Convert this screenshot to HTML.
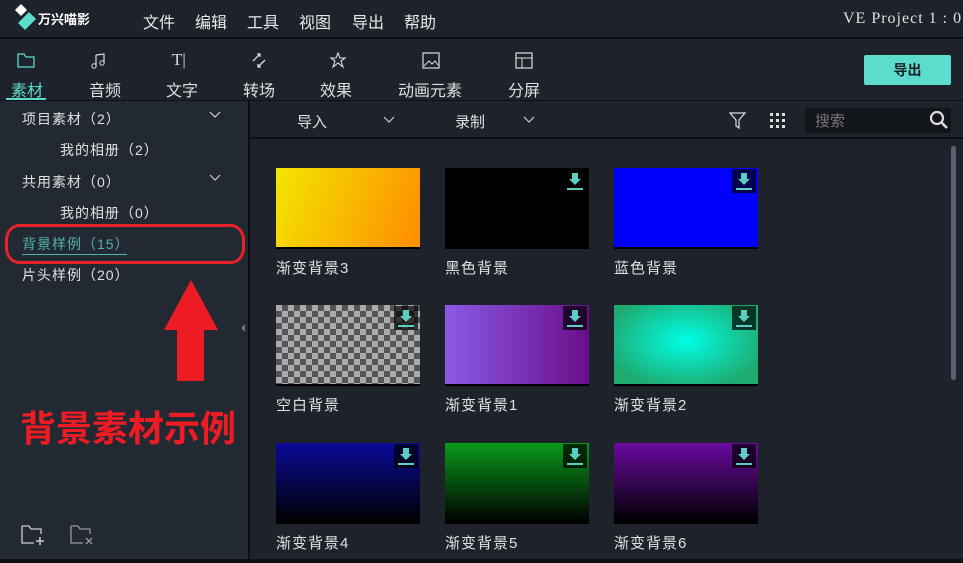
<!DOCTYPE html>
<html><head><meta charset="utf-8"><style>
*{margin:0;padding:0;box-sizing:border-box}
body{width:963px;height:563px;overflow:hidden;background:#1e232b;font-family:"Liberation Sans","Noto Sans CJK SC",sans-serif;color:#e6e6e6;position:relative}
.a{position:absolute}
.menu span{position:absolute;top:9px;font-size:16px;color:#e8e8e8}
.tab{position:absolute;top:77px;font-size:16px;color:#dedede;width:60px;text-align:center}
.ic{position:absolute;top:52px}
.lt{position:absolute;font-size:14px;color:#e0e0e0;letter-spacing:1px;white-space:nowrap}
.th{position:absolute;width:144px;height:81px;border-bottom:2px solid #000}
.dl{position:absolute;right:2px;top:1px;width:24px;height:24px;background:rgba(0,0,0,.7)}
.dl:before{content:"";position:absolute;left:9px;top:4px;width:6px;height:6px;background:#5ccfc2}
.dl:after{content:"";position:absolute;left:6px;top:10px;border-left:6px solid transparent;border-right:6px solid transparent;border-top:6px solid #5ccfc2}
.dl i{position:absolute;left:4px;top:19px;width:16px;height:2px;background:#5ccfc2}
.lb{position:absolute;font-size:15px;color:#e0e0e0;letter-spacing:1px}
</style></head><body>
<svg class="a" style="left:15px;top:4px" width="22" height="26" viewBox="0 0 22 26"><path d="M6 0 L12 6 L6 12 L0 6Z" fill="#fff"/><path d="M14 8 L21 15 L10 26 L3 19Z" fill="#5cdccc"/></svg>
<div class="a" style="left:38px;top:9px;font-size:13px;font-weight:bold;color:#fff">万兴喵影</div>
<div class="menu"><span style="left:143px">文件</span><span style="left:195px">编辑</span><span style="left:247px">工具</span><span style="left:299px">视图</span><span style="left:352px">导出</span><span style="left:404px">帮助</span></div>
<div class="a" style="left:843px;top:10px;font-family:'Liberation Serif',serif;font-size:16px;letter-spacing:1px;color:#e0e0e0;white-space:nowrap">VE Project 1 : 0</div>
<div class="a" style="left:0;top:37px;width:963px;height:2px;background:#0d0f12"></div>
<svg class="ic" style="left:17px" width="18" height="16"><path d="M1 2h6l2 3h8v10H1z" fill="none" stroke="#5cdccc" stroke-width="1.3"/></svg>
<svg class="ic" style="left:90px" width="18" height="18"><path d="M6 3v11M6 3l8-1v9" fill="none" stroke="#ddd" stroke-width="1.2"/><circle cx="4" cy="14" r="2.2" fill="none" stroke="#ddd"/><circle cx="12" cy="11" r="2.2" fill="none" stroke="#ddd"/></svg>
<div class="a" style="left:172px;top:50px;font-size:17px;color:#ddd;font-family:'Liberation Serif',serif">T|</div>
<svg class="ic" style="left:250px" width="18" height="18"><path d="M3 9 L10 2 M7 2h3v3 M15 8 L8 15 M8 12v3h3" fill="none" stroke="#ddd" stroke-width="1.3"/></svg>
<svg class="ic" style="left:329px" width="18" height="18"><path d="M9 1 L11 6 L16 6 L12 9 L14 15 L9 11 L4 15 L6 9 L2 6 L7 6Z" fill="none" stroke="#ddd" stroke-width="1.1"/></svg>
<svg class="ic" style="left:422px" width="18" height="18"><rect x="1" y="1" width="16" height="15" fill="none" stroke="#ddd" stroke-width="1.2"/><path d="M2 14l5-5 3 3 3-3 3 4" fill="none" stroke="#ddd"/></svg>
<svg class="ic" style="left:515px" width="18" height="18"><rect x="1" y="1" width="16" height="15" fill="none" stroke="#ddd" stroke-width="1.2"/><path d="M1 6h16M7 6v10" stroke="#ddd" fill="none"/></svg>
<div class="tab" style="left:-3px;color:#5cdccc">素材</div>
<div class="tab" style="left:75px">音频</div>
<div class="tab" style="left:152px">文字</div>
<div class="tab" style="left:229px">转场</div>
<div class="tab" style="left:370px;width:120px">动画元素</div>
<div class="tab" style="left:306px">效果</div>
<div class="tab" style="left:494px">分屏</div>
<div class="a" style="left:6px;top:98px;width:40px;height:2px;background:#5cdccc"></div>
<div class="a" style="left:864px;top:55px;width:87px;height:30px;background:#5cdccc;border-radius:2px;color:#1a1e24;font-size:14px;font-weight:bold;text-align:center;line-height:30px">导出</div>
<div class="a" style="left:0;top:100px;width:963px;height:1px;background:#0d0f12"></div>
<div class="a" style="left:0;top:101px;width:248px;height:462px;background:#232932"></div>
<div class="a" style="left:248px;top:101px;width:2px;height:462px;background:#0d0f12"></div>
<div class="lt" style="left:22px;top:109px">项目素材（2）</div>
<div class="lt" style="left:60px;top:140px">我的相册（2）</div>
<div class="lt" style="left:22px;top:172px">共用素材（0）</div>
<div class="lt" style="left:60px;top:203px">我的相册（0）</div>
<div class="lt" style="left:22px;top:234px;color:#4fb3aa">背景样例（15）</div>
<div class="a" style="left:22px;top:254px;width:105px;height:1px;background:#4fb3aa"></div>
<div class="lt" style="left:22px;top:265px">片头样例（20）</div>
<svg class="a" style="left:208px;top:110px" width="14" height="10"><path d="M2 2l5 5 5-5" fill="none" stroke="#ccc" stroke-width="1.2"/></svg>
<svg class="a" style="left:208px;top:173px" width="14" height="10"><path d="M2 2l5 5 5-5" fill="none" stroke="#ccc" stroke-width="1.2"/></svg>
<div class="a" style="left:5px;top:224px;width:240px;height:40px;border:3px solid #e8202a;border-radius:14px/16px"></div>
<svg class="a" style="left:163px;top:278px" width="58" height="105"><path d="M28 2 L55 52 L41 52 L41 103 L14 103 L14 52 L1 52Z" fill="#ed1c24"/></svg>
<div class="a" style="left:20px;top:400px;font-size:36px;font-weight:bold;color:#ed1c24;white-space:nowrap">背景素材示例</div>
<svg class="a" style="left:240px;top:323px" width="6" height="10"><path d="M5 1v8L1 5z" fill="#6a7585"/></svg>
<svg class="a" style="left:21px;top:524px" width="26" height="22"><path d="M1 2h7l2 3h10v5M1 2v17h12" fill="none" stroke="#ccc" stroke-width="1.3"/><path d="M19 13v8M15 17h8" stroke="#ccc" stroke-width="1.5"/></svg>
<svg class="a" style="left:70px;top:524px" width="26" height="22"><path d="M1 2h7l2 3h10v5M1 2v17h12" fill="none" stroke="#999" stroke-width="1.3"/><path d="M16 14l6 6M22 14l-6 6" stroke="#999" stroke-width="1.3"/></svg>
<div class="a" style="left:250px;top:101px;width:713px;height:36px;background:#1e232b"></div>
<div class="a" style="left:250px;top:137px;width:713px;height:2px;background:#0d0f12"></div>
<div class="a" style="left:297px;top:111px;font-size:15px;color:#e0e0e0">导入</div>
<svg class="a" style="left:382px;top:115px" width="14" height="10"><path d="M2 2l5 5 5-5" fill="none" stroke="#ccc" stroke-width="1.2"/></svg>
<div class="a" style="left:455px;top:111px;font-size:15px;color:#e0e0e0">录制</div>
<svg class="a" style="left:522px;top:115px" width="14" height="10"><path d="M2 2l5 5 5-5" fill="none" stroke="#ccc" stroke-width="1.2"/></svg>
<svg class="a" style="left:729px;top:112px" width="18" height="18"><path d="M1 1h15l-6 7v8l-3-2V8z" fill="none" stroke="#ddd" stroke-width="1.2"/></svg>
<svg class="a" style="left:769px;top:112px" width="18" height="18" fill="#ddd"><rect x="1" y="1" width="3" height="3"/><rect x="7" y="1" width="3" height="3"/><rect x="13" y="1" width="3" height="3"/><rect x="1" y="7" width="3" height="3"/><rect x="7" y="7" width="3" height="3"/><rect x="13" y="7" width="3" height="3"/><rect x="1" y="13" width="3" height="3"/><rect x="7" y="13" width="3" height="3"/><rect x="13" y="13" width="3" height="3"/></svg>
<div class="a" style="left:805px;top:108px;width:146px;height:25px;background:#12161b"></div>
<div class="a" style="left:815px;top:110px;font-size:15px;color:#777">搜索</div>
<svg class="a" style="left:929px;top:110px" width="20" height="20"><circle cx="8" cy="8" r="6" fill="none" stroke="#ddd" stroke-width="2.2"/><path d="M12 12l6 6" stroke="#ddd" stroke-width="2.5"/></svg>
<div class="a" style="left:951px;top:146px;width:5px;height:234px;background:#5a6170;border-radius:3px"></div>
<div class="th" style="left:276px;top:168px;background:linear-gradient(110deg,#f2e600,#ff8c00)"></div>
<div class="th" style="left:445px;top:168px;background:#000"><div class="dl"><i></i></div></div>
<div class="th" style="left:614px;top:168px;background:#0000ff"><div class="dl"><i></i></div></div>
<div class="th" style="left:276px;top:305px;background-color:#aaa;background-image:linear-gradient(45deg,#555 25%,transparent 25%,transparent 75%,#555 75%),linear-gradient(45deg,#555 25%,transparent 25%,transparent 75%,#555 75%);background-size:12px 12px;background-position:0 0,6px 6px"><div class="dl"><i></i></div></div>
<div class="th" style="left:445px;top:305px;background:linear-gradient(90deg,#8a5ae6,#6a0e8a)"><div class="dl"><i></i></div></div>
<div class="th" style="left:614px;top:305px;background:radial-gradient(ellipse at 50% 45%,#00ffe6,#1faa70 80%)"><div class="dl"><i></i></div></div>
<div class="th" style="left:276px;top:443px;background:linear-gradient(180deg,#0a0a9a,#000)"><div class="dl"><i></i></div></div>
<div class="th" style="left:445px;top:443px;background:linear-gradient(180deg,#0a9a1a,#000)"><div class="dl"><i></i></div></div>
<div class="th" style="left:614px;top:443px;background:linear-gradient(180deg,#6a0aa0,#000)"><div class="dl"><i></i></div></div>
<div class="lb" style="left:276px;top:257px">渐变背景3</div>
<div class="lb" style="left:445px;top:257px">黑色背景</div>
<div class="lb" style="left:614px;top:257px">蓝色背景</div>
<div class="lb" style="left:276px;top:394px">空白背景</div>
<div class="lb" style="left:445px;top:394px">渐变背景1</div>
<div class="lb" style="left:614px;top:394px">渐变背景2</div>
<div class="lb" style="left:276px;top:532px">渐变背景4</div>
<div class="lb" style="left:445px;top:532px">渐变背景5</div>
<div class="lb" style="left:614px;top:532px">渐变背景6</div>
<div class="a" style="left:0;top:559px;width:963px;height:4px;background:#0d0f12"></div>
</body></html>
